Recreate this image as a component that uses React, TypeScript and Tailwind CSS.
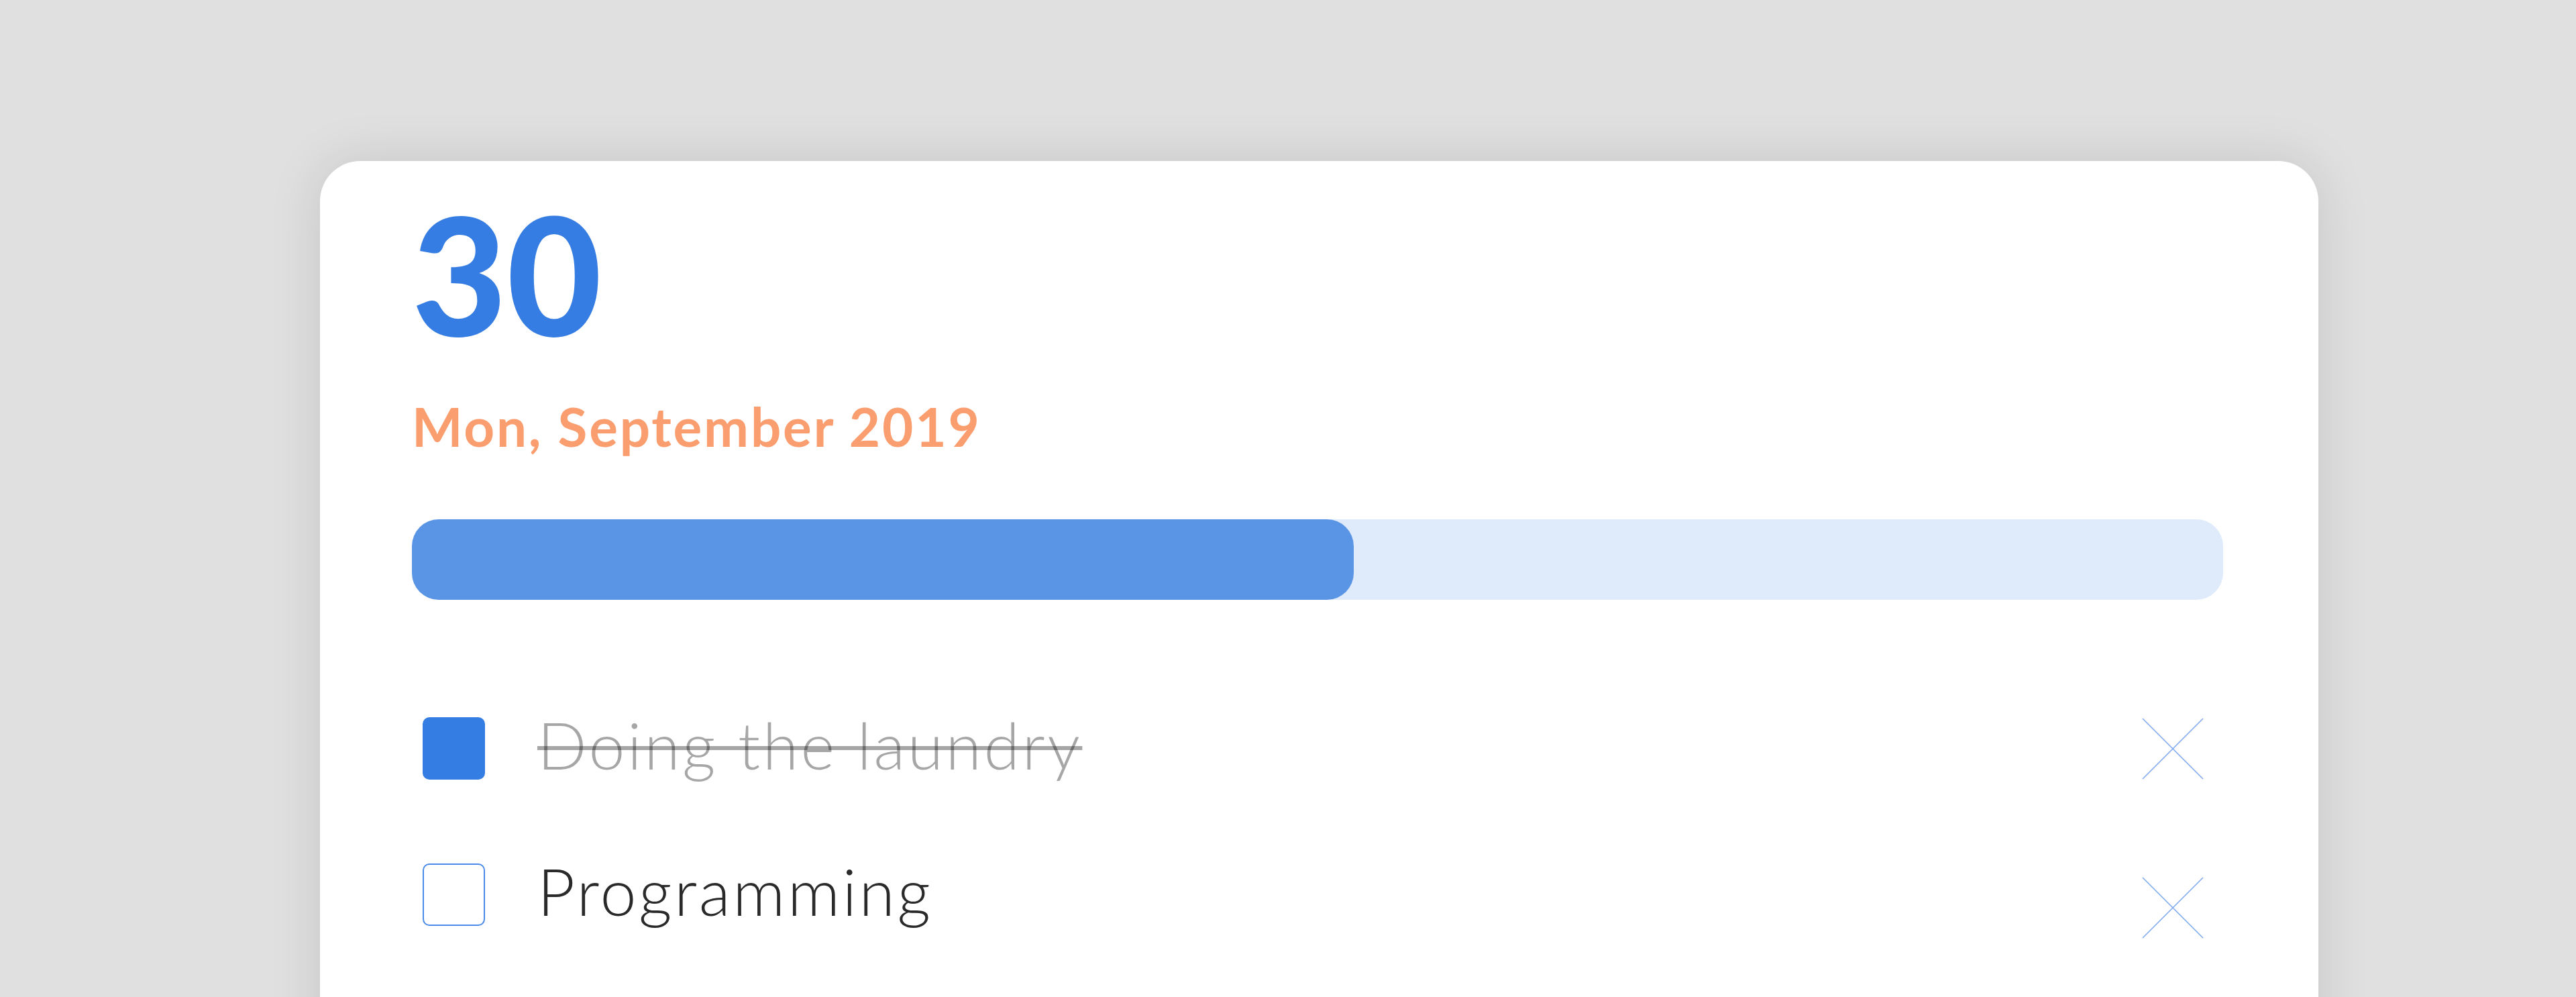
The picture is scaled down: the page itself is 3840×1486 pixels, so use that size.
import React from 'react';

interface Task {
  label: string;
  done: boolean;
}

const tasks: Task[] = [
  { label: 'Doing the laundry', done: true },
  { label: 'Programming', done: false },
];

function CloseMark() {
  return (
    <svg width="92" height="92" viewBox="0 0 92 92" fill="none">
      <path d="M1 1 L91 91 M91 1 L1 91" stroke="#7faaeb" strokeWidth="1.6" />
    </svg>
  );
}

function TaskRow({ task, index }: { task: Task; index: number }) {
  return (
    <div className="flex h-[93px] items-center pl-[16px] pr-[29px]">
      {task.done ? (
        <div className="h-[93px] w-[93px] shrink-0 rounded-[10px] bg-[#347ee3]" />
      ) : (
        <div className="h-[93px] w-[93px] shrink-0 rounded-[10px] border-2 border-[#4a8ae8] bg-white" />
      )}
      <span
        className={`mb-[12px] ml-[78px] text-[97px] leading-none font-light tracking-[3.5px] ${
          task.done
            ? 'text-black/35 line-through decoration-[6px]'
            : 'text-[#2a2a2a]'
        }`}
      >
        {task.label}
      </span>
      <div className={`ml-auto ${index === 1 ? 'mt-[38px]' : ''}`}>
        <CloseMark />
      </div>
    </div>
  );
}

export default function App() {
  const progress = 52;

  return (
    <div className="h-screen overflow-hidden bg-[#e0e0e0] pt-[240px] font-['Lato',sans-serif]">
      {/* Card */}
      <div className="ml-[477px] h-[1400px] w-[2979px] rounded-[60px] bg-white pt-[45px] pl-[137px] pr-[142px] shadow-[0_0_80px_rgba(0,0,0,0.12)]">
        <div className="text-[244px] leading-none font-black text-[#357de2]">30</div>

        <div className="mt-[66px] text-[80px] leading-none font-bold tracking-[2.8px] text-[#fa9e6f]">
          Mon, September 2019
        </div>

        {/* Progress */}
        <div className="mt-[99px] h-[120px] w-full rounded-[40px] bg-[#dfebfb]">
          <div className="h-full rounded-[40px] bg-[#5a95e5]" style={{ width: `${progress}%` }} />
        </div>

        {/* Tasks */}
        <div className="mt-[175px] flex flex-col gap-[125px]">
          {tasks.map((t, i) => (
            <TaskRow key={t.label} task={t} index={i} />
          ))}
        </div>
      </div>
    </div>
  );
}
